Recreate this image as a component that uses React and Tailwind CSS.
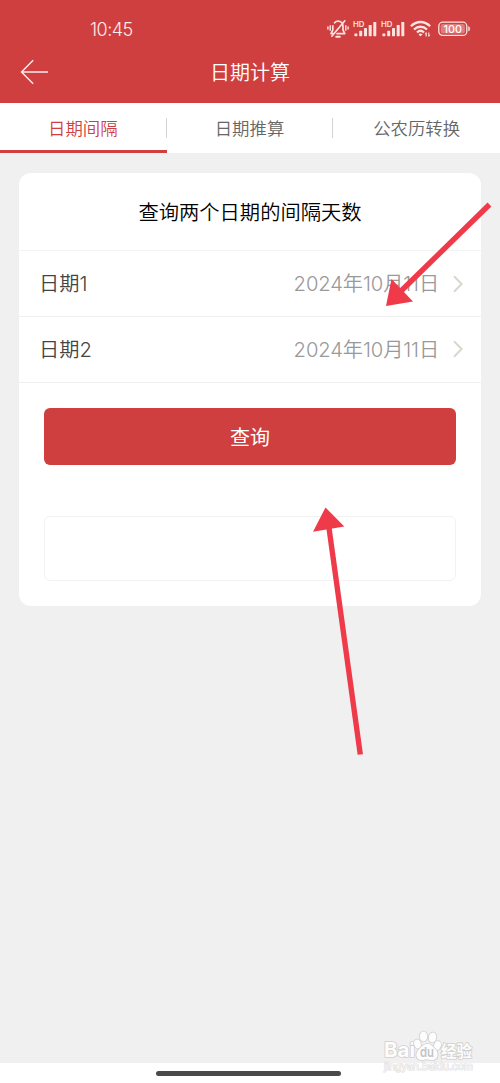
import React, { useState } from "react";

const tabs = ["日期间隔", "日期推算", "公农历转换"];

const rows = [
  { label: "日期1", value: "2024年10月11日" },
  { label: "日期2", value: "2024年10月11日" },
];

const Signal = () => (
  <svg width="25" height="18" viewBox="0 0 25 18" fill="#fbe3e2">
    <text x="0" y="6.8" fontSize="7.6" fontWeight="600" textLength="11.5" lengthAdjust="spacingAndGlyphs">
      HD
    </text>
    <rect x="1.4" y="13.4" width="3" height="2.8" rx="0.6" />
    <rect x="6.2" y="10.8" width="3" height="5.4" rx="0.6" />
    <rect x="11" y="8" width="3" height="8.2" rx="0.6" />
    <rect x="15.7" y="5" width="3" height="11.2" rx="0.6" />
    <rect x="20.3" y="2" width="3" height="14.2" rx="0.6" />
  </svg>
);

const MutedBell = () => (
  <svg width="22" height="20" viewBox="0 0 22 20" fill="none" stroke="#fbe3e2" strokeWidth="1.7" strokeLinecap="round" strokeLinejoin="round">
    <path d="M7.6 3.8C8.6 2.6 9.6 2.2 11 2.2c3 0 5 2.1 5 5v4l1.8 3.4H10" />
    <path d="M5.8 6.8v4.4L4 14.6h2.6" />
    <path d="M4.8 17.2L17.8 1.8" />
    <path d="M9.2 17.8h3.6" strokeWidth="1.9" />
    <path d="M3.2 6.8v4.4M0.9 8v2M18.8 6.8v4.4M21.1 8v2" strokeWidth="1.4" />
  </svg>
);

const Wifi = () => (
  <svg width="22" height="18" viewBox="0 0 22 18" fill="none" stroke="#fbe3e2" strokeWidth="2.3">
    <path d="M0.9 6.2C6.5 0.6 14.5 0.6 20.1 6.2" />
    <path d="M4 9.5C7.8 5.8 13.2 5.8 17 9.5" />
    <path d="M7 12.5C9.2 10.4 11.8 10.4 14 12.5" />
    <path d="M8.4 14.2L10.5 16.4l2.1-2.2c-1.2-1.1-3-1.1-4.2 0z" fill="#fbe3e2" stroke="none" />
    <path d="M16.2 12.6v3.8M18.8 12.6v3.8" strokeWidth="1.1" />
    <path d="M14.6 14.2l1.6-1.9v1.9zM20.4 14.8l-1.6 1.9v-1.9z" fill="#fbe3e2" stroke="none" />
  </svg>
);

const Battery = () => (
  <svg width="33" height="16" viewBox="0 0 33 16">
    <rect x="0.8" y="1.2" width="28" height="13.2" rx="4" fill="none" stroke="#fbe3e2" strokeWidth="1.3" />
    <rect x="2.7" y="3.1" width="24.2" height="9.4" rx="2.2" fill="#e07c7b" />
    <path d="M30.6 5.6c1.4.5 1.4 4 0 4.5z" fill="#fbe3e2" stroke="#fbe3e2" strokeWidth="0.6" />
    <text x="14.8" y="11.8" textAnchor="middle" fontSize="11" fontWeight="500" fill="#fff" textLength="18.5" lengthAdjust="spacingAndGlyphs">
      100
    </text>
  </svg>
);

const Header = () => (
  <header className="h-[102.7px] bg-[#cf3f3f] text-white">
    <div className="flex h-[42px] items-end justify-between pb-[3px] pl-[90px] pr-[29px]">
      <span className="text-[18px] leading-[19px] tracking-[-0.5px] text-[#fdecec]">10:45</span>
      <div className="flex items-center">
        <MutedBell />
        <span className="ml-[4px]"><Signal /></span>
        <span className="ml-[3px]"><Signal /></span>
        <span className="ml-[4px]"><Wifi /></span>
        <span className="ml-[6px]"><Battery /></span>
      </div>
    </div>
    <div className="grid h-[60px] grid-cols-[60px_1fr_60px] items-center">
      <svg className="ml-5" width="29" height="26" viewBox="0 0 29 26" fill="none" stroke="#fdecec" strokeWidth="1.4">
        <path d="M28 13H1.5M13.2 1.2L1.5 13l11.7 11.8" />
      </svg>
      <h1 className="pt-[2px] text-center text-[20px] leading-[30px]">日期计算</h1>
    </div>
  </header>
);

const Chevron = () => (
  <svg width="10" height="18" viewBox="0 0 10 18" fill="none" stroke="#d9d8ce" strokeWidth="2">
    <path d="M1 1.3L8.6 9L1 16.7" />
  </svg>
);

const Watermark = () => (
  <svg className="absolute bottom-[6px] right-[23px]" width="96" height="52" viewBox="0 0 96 52" fill="#fdfdfd" stroke="#cfcfcf" strokeWidth="1.6" paintOrder="stroke">
    <text x="3" y="31.5" fontSize="20" fontWeight="700" textLength="31" lengthAdjust="spacingAndGlyphs">Bai</text>
    <ellipse cx="36.5" cy="19" rx="3.3" ry="4.5" transform="rotate(-15 36.5 19)" />
    <ellipse cx="42.5" cy="11.5" rx="3.7" ry="5" />
    <ellipse cx="51.5" cy="12.5" rx="3.7" ry="5" transform="rotate(10 51.5 12.5)" />
    <ellipse cx="56.5" cy="20.5" rx="3.3" ry="4.5" transform="rotate(18 56.5 20.5)" />
    <path d="M46.5 19c4 0 5.2 2.7 7.7 5.1 3.8 3.8 3.2 10.5-2 10.8-3 .2-3.7-.5-6.2-.5s-3.5.7-6.3.5c-5.4-.4-5.5-7.200-1.700-10.600 3-2.700 4.300-5.300 8.500-5.300z" />
    <text x="39" y="32" fontSize="13.5" fontWeight="600" fill="#c4c4c4" stroke="none" textLength="14" lengthAdjust="spacingAndGlyphs">du</text>
    <text x="60" y="31.5" fontSize="16" fontWeight="700" textLength="31" lengthAdjust="spacingAndGlyphs">经验</text>
    <text x="3" y="44.5" fontSize="10.5" fill="#fafafa" stroke="#dedede" strokeWidth="1.2" textLength="89" lengthAdjust="spacingAndGlyphs">jingyan.baidu.com</text>
  </svg>
);

// Hint arrows laid over the form
const Arrows = () => (
  <svg className="pointer-events-none absolute left-0 top-0" width="500" height="1083" viewBox="0 0 500 1083" fill="#ee3a49" stroke="#ee3a49">
    <path d="M489.5 204.5L400 292" strokeWidth="5.4" />
    <path d="M386 306L391.5 279L413 301.5z" stroke="none" />
    <path d="M360.3 754.5L329 528" strokeWidth="5.4" />
    <path d="M325.5 507.5L344.3 526.5L313 531.7z" stroke="none" />
  </svg>
);

const App = () => {
  const [active, setActive] = useState(0);

  return (
    <div className="relative flex h-[1083px] w-[500px] flex-col overflow-hidden bg-[#f0f0f0] font-['Inter','Noto_Sans_CJK_SC',sans-serif] font-[350]">
      <Header />

      <nav className="grid h-[50.6px] grid-cols-3 bg-white">
        {tabs.map((tab, i) => (
          <button
            key={tab}
            onClick={() => setActive(i)}
            className={`flex flex-col text-[17.4px] ${i === active ? "text-[#cf3f3f]" : "text-[#666]"}`}
          >
            <span className="flex w-full flex-1 items-center pt-[3px]">
              <span className="flex-1 pt-[2px] text-center">{tab}</span>
              {i < 2 && <span className="h-5 w-px bg-[#d4d4d4]" />}
            </span>
            <span className={`h-[3px] w-full ${i === active ? "bg-[#cf3f3f]" : ""}`} />
          </button>
        ))}
      </nav>

      <main className="mx-[19px] mt-[19.5px] h-[433px] rounded-xl bg-white">
        <h2 className="flex h-[78.5px] items-center justify-center border-b border-[#f3f3f3] pt-1 text-[20.3px] font-[350] text-black">
          查询两个日期的间隔天数
        </h2>
        {rows.map((row) => (
          <div key={row.label} className="flex h-[65.7px] items-center border-b border-[#f0f0f0] pl-5 pr-[18px] text-[20.2px]">
            <span className="flex-1 pt-[2px] text-[#444]">{row.label}</span>
            <span className="mr-[14px] pt-[2px] tracking-[-0.1px] text-[#999]">{row.value}</span>
            <Chevron />
          </div>
        ))}
        <div className="px-[25px]">
          <button className="mt-[25px] block h-[57.5px] w-full rounded-md bg-[#cf3f3f] pt-[3px] text-[20px] font-normal text-white">
            查询
          </button>
          <div className="mt-[51px] h-[65px] rounded-md border border-[#f2f2f2]" />
        </div>
      </main>

      <footer className="mt-auto flex h-[20.5px] items-start justify-center bg-white pt-2">
        <div className="ml-[-3px] h-[5px] w-[185px] rounded-full bg-[#4a4a4a]" />
      </footer>

      <Watermark />
      <Arrows />
    </div>
  );
};

export default App;
